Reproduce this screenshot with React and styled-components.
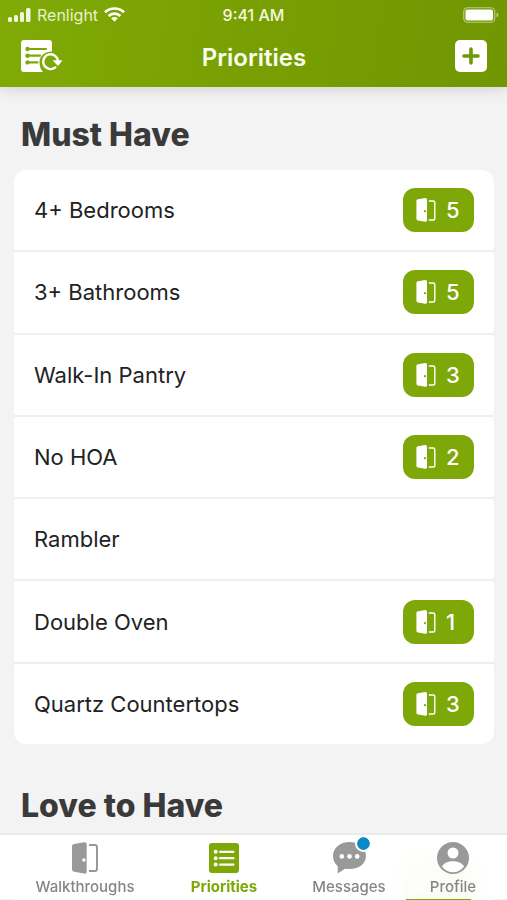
import React from "react";
import styled, { createGlobalStyle } from "styled-components";

const GlobalStyle = createGlobalStyle`
  *, *::before, *::after { box-sizing: border-box; }
  body {
    margin: 0;
    background: #f3f3f3;
    font-family: Inter, "Liberation Sans", sans-serif;
    color: #222;
  }
  button { font: inherit; color: inherit; border: 0; padding: 0; background: none; cursor: pointer; }
  svg { display: block; }
`;

const Screen = styled.div`
  display: flex;
  flex-direction: column;
  height: 100vh;
  overflow: hidden;
`;

const Header = styled.header`
  position: relative;
  z-index: 1;
  flex: none;
  padding-bottom: 5px;
  color: #fff;
  background: linear-gradient(100deg, #80ab06, #789f02 50%, #709602);
  box-shadow: 0 2px 14px rgba(0, 0, 0, 0.14);
`;

const StatusBar = styled.div`
  display: grid;
  grid-template-columns: 1fr auto 1fr;
  align-items: center;
  height: 30px;
  padding: 0 8px;
  font-size: 16px;
  line-height: 20px;
`;

const Carrier = styled.div`
  display: flex;
  align-items: center;
  gap: 6px;
  color: #e9f2cd;
`;

const Clock = styled.time`
  font-weight: 500;
  color: #f3f8df;
`;

const BatterySlot = styled.div`
  justify-self: end;
`;

const TitleBar = styled.div`
  display: grid;
  grid-template-columns: 1fr auto 1fr;
  align-items: center;
  height: 52px;
  padding: 0 20px 0 21px;
`;

const Title = styled.h1`
  margin: 0;
  padding-top: 4px;
  font-size: 24px;
  line-height: 28px;
  font-weight: 600;
  color: #fbfdf0;
`;

const HeaderButton = styled.button`
  justify-self: ${(p) => (p.$end ? "end" : "start")};
`;

const Content = styled.main`
  flex: 1;
  min-height: 0;
  overflow-y: auto;
  scrollbar-width: none;
  padding: 28px 13px 0 14px;
`;

const Section = styled.section`
  margin-bottom: 42px;
`;

const SectionTitle = styled.h2`
  margin: 0 0 15px;
  padding-left: 7px;
  font-size: 32px;
  line-height: 40px;
  font-weight: 800;
  color: #3a3a3a;
`;

const List = styled.ul`
  display: grid;
  grid-auto-rows: 1fr;
  gap: 2px;
  min-height: ${(p) => p.$minHeight}px;
  margin: 0;
  padding: 0;
  list-style: none;
  border-radius: 12px;
  overflow: hidden;
  background: #efefef;
`;

const Row = styled.li`
  display: flex;
  align-items: center;
  justify-content: space-between;
  min-height: 80px;
  padding: 0 20px;
  font-size: 22px;
  line-height: 28px;
  border-radius: 2px;
  background: #fff;
`;

const Badge = styled.button`
  display: flex;
  align-items: center;
  gap: 10px;
  width: 71px;
  height: 44px;
  margin-left: auto;
  padding: 0 13px;
  border-radius: 12px;
  background: #7ea808;
  color: #fff;
  font-weight: 500;
`;

const TabBar = styled.nav`
  position: fixed;
  inset: auto 0 1px;
  z-index: 2;
  display: grid;
  grid-template-columns: 154fr 124fr 126fr 82fr;
  height: 66px;
  padding: 7px 13px 0 8px;
  border-top: 2px solid #ebebeb;
  background: rgba(255, 255, 255, 0.96);
  backdrop-filter: blur(14px);
`;

const Tab = styled.button`
  display: flex;
  flex-direction: column;
  align-items: center;
  gap: 4px;
  font-size: 15px;
  line-height: 18px;
  font-weight: ${(p) => (p.$active ? 700 : 500)};
  color: ${(p) => (p.$active ? "#7ea808" : "#868686")};
`;

const TabIcon = styled.span`
  position: relative;
  display: flex;
  align-items: center;
  height: 32px;
  color: ${(p) => (p.$active ? "#7ea808" : "#999")};
`;

const Dot = styled.span`
  position: absolute;
  top: -7px;
  right: -6px;
  width: 17px;
  height: 17px;
  border: 2px solid #fff;
  border-radius: 50%;
  background: #0788c8;
  background-clip: padding-box;
`;

const Signal = () => (
  <svg width="23" height="15" viewBox="0 0 23 15" fill="#f1f7dc" aria-hidden="true">
    <rect x="0" y="9" width="4" height="5" rx="1.5" />
    <rect x="6" y="7" width="4" height="7" rx="1.5" />
    <rect x="12" y="4" width="4" height="10" rx="1.5" />
    <rect x="18" y="0" width="4.5" height="14" rx="1.5" />
  </svg>
);

const Wifi = () => (
  <svg width="21" height="17" viewBox="0 0 21 17" fill="none" stroke="#fff" strokeWidth="2.7" aria-hidden="true">
    <path d="M1 5.3C6.3 0.2 14.7 0.2 20 5.3" />
    <path d="M4.6 9C8 5.8 13 5.8 16.4 9" />
    <path d="M7.2 11.3C9 9.6 12 9.6 13.8 11.3L10.5 14.7Z" fill="#fff" stroke="none" />
  </svg>
);

const Battery = () => (
  <svg width="36" height="16" viewBox="0 0 36 16" aria-hidden="true">
    <rect x="0.75" y="0.75" width="31" height="14.5" rx="4" fill="none" stroke="#b9cf80" strokeWidth="1.2" />
    <rect x="2.5" y="2.5" width="27.5" height="11" rx="2" fill="#fff" />
    <path d="M33.5 5.5C36 6.2 36 9.8 33.5 10.5Z" fill="#b9cf80" />
  </svg>
);

const ListRefresh = () => (
  <svg width="42" height="32" viewBox="0 0 42 32" aria-hidden="true">
    <path d="M3 0H28Q31 0 31 3V11.6C24 11.4 18.5 16 18.5 22.4Q18.5 28 22 32H3Q0 32 0 29V3Q0 0 3 0Z" fill="#fff" />
    <g stroke="#7ea808" strokeWidth="2.2" strokeLinecap="round">
      <path d="M7 9H25M7 15.7H19M7 22.4H16.5" />
    </g>
    <g fill="#7ea808">
      <circle cx="6.5" cy="9" r="2.2" />
      <circle cx="6.5" cy="15.7" r="2.2" />
      <circle cx="6.5" cy="22.4" r="2.2" />
    </g>
    <path d="M34.3 27.4A7.4 7.4 0 1 1 37 22" fill="none" stroke="#fff" strokeWidth="2.4" strokeLinecap="round" />
    <path d="M32.4 20.7H40.8L37 25.5Z" fill="#fff" stroke="#fff" strokeWidth="0.8" strokeLinejoin="round" />
  </svg>
);

const Plus = () => (
  <svg width="32" height="32" viewBox="0 0 32 32" aria-hidden="true">
    <rect width="32" height="32" rx="5" fill="#fff" />
    <path d="M16 9V23M9 16H23" stroke="#729800" strokeWidth="3.6" strokeLinecap="round" />
  </svg>
);

const Door = ({ large }) => (
  <svg width={large ? 26 : 20} height={large ? 32 : 24} viewBox={large ? "0 0 26 32" : "0 0 20 24"} aria-hidden="true">
    {large ? (
      <>
        <path d="M2 1.9L12.2 0.2Q14.7 0 14.7 2V30Q14.7 32 12.2 31.6L2 29.8Q0 29.4 0 27.6V4Q0 2.2 2 1.9Z" fill="currentColor" />
        <path d="M17 3H22.8Q25 3 25 5.2V26.8Q25 29 22.8 29H17" fill="none" stroke="currentColor" strokeWidth="2" />
        <circle cx="11.9" cy="18" r="1.7" fill="#fff" />
      </>
    ) : (
      <>
        <path d="M2 1.2L9.2 0.1Q11 0 11 1.8V22.2Q11 24 9.2 23.8L2 22.6Q0.4 22.3 0.4 20.8V3Q0.4 1.5 2 1.2Z" fill="#fff" />
        <path d="M12.8 3H17Q18.8 3 18.8 4.8V20.2Q18.8 22 17 22H12.8" fill="none" stroke="#fff" strokeWidth="1.4" />
        <circle cx="9" cy="13.2" r="1.1" fill="#7ea808" />
      </>
    )}
  </svg>
);

const ListIcon = () => (
  <svg width="30" height="30" viewBox="0 0 30 30" aria-hidden="true">
    <rect width="30" height="30" rx="3" fill="currentColor" />
    <g stroke="#fff" strokeWidth="2.2" strokeLinecap="round">
      <path d="M11 8.8H24.5M11 15.2H24.5M11 21.6H24.5" />
    </g>
    <g fill="#fff">
      <circle cx="6.7" cy="8.8" r="2" />
      <circle cx="6.7" cy="15.2" r="2" />
      <circle cx="6.7" cy="21.6" r="2" />
    </g>
  </svg>
);

const Chat = () => (
  <svg width="33" height="32" viewBox="0 0 33 32" aria-hidden="true">
    <path d="M16.5 0C7.2 0 0 6 0 13.8C0 18.2 1.7 21.7 4.7 24.2V31.5L12 26.8C25 28.6 33 22.4 33 13.8C33 6 25.8 0 16.5 0Z" fill="currentColor" />
    <g fill="#fff">
      <circle cx="8.8" cy="14.4" r="2.3" />
      <circle cx="16.5" cy="14.4" r="2.3" />
      <circle cx="24.2" cy="14.4" r="2.3" />
    </g>
  </svg>
);

const Person = () => (
  <svg width="32" height="32" viewBox="0 0 32 32" aria-hidden="true">
    <circle cx="16" cy="16" r="16" fill="currentColor" />
    <circle cx="16" cy="11" r="5.5" fill="#fff" />
    <path d="M5 24.5C8.5 17.5 23.5 17.5 27 24.5C22 32.2 10 32.2 5 24.5Z" fill="#fff" />
  </svg>
);

const mustHave = [
  ["4+ Bedrooms", 5],
  ["3+ Bathrooms", 5],
  ["Walk-In Pantry", 3],
  ["No HOA", 2],
  ["Rambler", null],
  ["Double Oven", 1],
  ["Quartz Countertops", 3],
];

export default function App() {
  return (
    <Screen>
      <GlobalStyle />
      <Header>
        <StatusBar>
          <Carrier>
            <Signal />
            <span>Renlight</span>
            <Wifi />
          </Carrier>
          <Clock>9:41 AM</Clock>
          <BatterySlot>
            <Battery />
          </BatterySlot>
        </StatusBar>
        <TitleBar>
          <HeaderButton aria-label="Refresh list">
            <ListRefresh />
          </HeaderButton>
          <Title>Priorities</Title>
          <HeaderButton $end aria-label="Add priority">
            <Plus />
          </HeaderButton>
        </TitleBar>
      </Header>
      <Content>
        <Section>
          <SectionTitle>Must Have</SectionTitle>
          <List $minHeight={574}>
            {mustHave.map(([name, count]) => (
              <Row key={name}>
                <span>{name}</span>
                {count !== null && (
                  <Badge aria-label={`${name}: ${count} walkthroughs`}>
                    <Door />
                    <span>{count}</span>
                  </Badge>
                )}
              </Row>
            ))}
          </List>
        </Section>
        <Section>
          <SectionTitle>Love to Have</SectionTitle>
          <List $minHeight={82}>
            <Row>
              <Badge aria-label="Walkthroughs">
                <Door />
              </Badge>
            </Row>
          </List>
        </Section>
      </Content>
      <TabBar>
        <Tab>
          <TabIcon><Door large /></TabIcon>
          Walkthroughs
        </Tab>
        <Tab $active aria-current="page">
          <TabIcon $active><ListIcon /></TabIcon>
          Priorities
        </Tab>
        <Tab>
          <TabIcon><Chat /><Dot /></TabIcon>
          Messages
        </Tab>
        <Tab>
          <TabIcon><Person /></TabIcon>
          Profile
        </Tab>
      </TabBar>
    </Screen>
  );
}
